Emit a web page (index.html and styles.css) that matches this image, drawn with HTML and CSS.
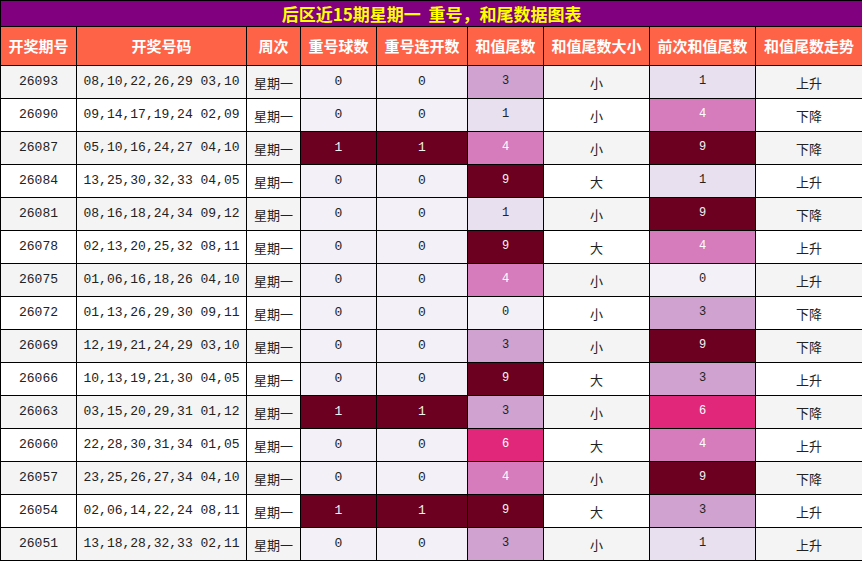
FILE: index.html
```html
<!DOCTYPE html>
<html lang="zh-CN">
<head>
<meta charset="utf-8">
<title>后区近15期星期一 重号，和尾数据图表</title>
<link rel="stylesheet" href="styles.css">
</head>
<body>
<table class="chart">
  <colgroup>
    <col class="c-issue"><col class="c-nums"><col class="c-week"><col class="c-rep"><col class="c-repc"><col class="c-tail"><col class="c-size"><col class="c-prev"><col class="c-trend">
  </colgroup>
  <thead>
    <tr class="title-row"><th colspan="9">后区近15期星期一&nbsp;&nbsp;重号，和尾数据图表</th></tr>
    <tr class="head-row">
      <th>开奖期号</th><th>开奖号码</th><th>周次</th><th>重号球数</th><th>重号连开数</th><th>和值尾数</th><th>和值尾数大小</th><th>前次和值尾数</th><th>和值尾数走势</th>
    </tr>
  </thead>
  <tbody>
    <tr><td class="mono">26093</td><td class="mono">08,10,22,26,29 03,10</td><td class="cjk">星期一</td><td class="v r0">0</td><td class="v r0">0</td><td class="t t3">3</td><td class="cjk">小</td><td class="t t1">1</td><td class="cjk">上升</td></tr>
    <tr><td class="mono">26090</td><td class="mono">09,14,17,19,24 02,09</td><td class="cjk">星期一</td><td class="v r0">0</td><td class="v r0">0</td><td class="t t1">1</td><td class="cjk">小</td><td class="t t4">4</td><td class="cjk">下降</td></tr>
    <tr><td class="mono">26087</td><td class="mono">05,10,16,24,27 04,10</td><td class="cjk">星期一</td><td class="v r1">1</td><td class="v r1">1</td><td class="t t4">4</td><td class="cjk">小</td><td class="t t9">9</td><td class="cjk">下降</td></tr>
    <tr><td class="mono">26084</td><td class="mono">13,25,30,32,33 04,05</td><td class="cjk">星期一</td><td class="v r0">0</td><td class="v r0">0</td><td class="t t9">9</td><td class="cjk">大</td><td class="t t1">1</td><td class="cjk">上升</td></tr>
    <tr><td class="mono">26081</td><td class="mono">08,16,18,24,34 09,12</td><td class="cjk">星期一</td><td class="v r0">0</td><td class="v r0">0</td><td class="t t1">1</td><td class="cjk">小</td><td class="t t9">9</td><td class="cjk">下降</td></tr>
    <tr><td class="mono">26078</td><td class="mono">02,13,20,25,32 08,11</td><td class="cjk">星期一</td><td class="v r0">0</td><td class="v r0">0</td><td class="t t9">9</td><td class="cjk">大</td><td class="t t4">4</td><td class="cjk">上升</td></tr>
    <tr><td class="mono">26075</td><td class="mono">01,06,16,18,26 04,10</td><td class="cjk">星期一</td><td class="v r0">0</td><td class="v r0">0</td><td class="t t4">4</td><td class="cjk">小</td><td class="t t0">0</td><td class="cjk">上升</td></tr>
    <tr><td class="mono">26072</td><td class="mono">01,13,26,29,30 09,11</td><td class="cjk">星期一</td><td class="v r0">0</td><td class="v r0">0</td><td class="t t0">0</td><td class="cjk">小</td><td class="t t3">3</td><td class="cjk">下降</td></tr>
    <tr><td class="mono">26069</td><td class="mono">12,19,21,24,29 03,10</td><td class="cjk">星期一</td><td class="v r0">0</td><td class="v r0">0</td><td class="t t3">3</td><td class="cjk">小</td><td class="t t9">9</td><td class="cjk">下降</td></tr>
    <tr><td class="mono">26066</td><td class="mono">10,13,19,21,30 04,05</td><td class="cjk">星期一</td><td class="v r0">0</td><td class="v r0">0</td><td class="t t9">9</td><td class="cjk">大</td><td class="t t3">3</td><td class="cjk">上升</td></tr>
    <tr><td class="mono">26063</td><td class="mono">03,15,20,29,31 01,12</td><td class="cjk">星期一</td><td class="v r1">1</td><td class="v r1">1</td><td class="t t3">3</td><td class="cjk">小</td><td class="t t6">6</td><td class="cjk">下降</td></tr>
    <tr><td class="mono">26060</td><td class="mono">22,28,30,31,34 01,05</td><td class="cjk">星期一</td><td class="v r0">0</td><td class="v r0">0</td><td class="t t6">6</td><td class="cjk">大</td><td class="t t4">4</td><td class="cjk">上升</td></tr>
    <tr><td class="mono">26057</td><td class="mono">23,25,26,27,34 04,10</td><td class="cjk">星期一</td><td class="v r0">0</td><td class="v r0">0</td><td class="t t4">4</td><td class="cjk">小</td><td class="t t9">9</td><td class="cjk">下降</td></tr>
    <tr><td class="mono">26054</td><td class="mono">02,06,14,22,24 08,11</td><td class="cjk">星期一</td><td class="v r1">1</td><td class="v r1">1</td><td class="t t9">9</td><td class="cjk">大</td><td class="t t3">3</td><td class="cjk">上升</td></tr>
    <tr><td class="mono">26051</td><td class="mono">13,18,28,32,33 02,11</td><td class="cjk">星期一</td><td class="v r0">0</td><td class="v r0">0</td><td class="t t3">3</td><td class="cjk">小</td><td class="t t1">1</td><td class="cjk">上升</td></tr>
  </tbody>
</table>
</body>
</html>
```

FILE: styles.css
```css
html, body {
  margin: 0;
  padding: 0;
  background: #ffffff;
}

.chart {
  border-collapse: collapse;
  table-layout: fixed;
  width: 862px;
  font-family: "Liberation Mono", "DejaVu Sans Mono", monospace;
  color: #222;
}

.c-issue { width: 76px; }
.c-nums  { width: 170px; }
.c-week  { width: 54px; }
.c-rep   { width: 76px; }
.c-repc  { width: 91px; }
.c-tail  { width: 76px; }
.c-size  { width: 106px; }
.c-prev  { width: 106px; }
.c-trend { width: 107px; }

.chart th,
.chart td {
  border: 1px solid #000;
  padding: 0;
  text-align: center;
  vertical-align: middle;
  white-space: nowrap;
  overflow: hidden;
}

.title-row th {
  height: 25px;
  background: #800080;
  color: #ffff00;
  font-family: "Noto Sans CJK SC", "Liberation Sans", sans-serif;
  font-size: 17px;
  font-weight: bold;
  line-height: 24px;
}

.head-row th {
  height: 38px;
  background: #ff6347;
  color: #ffffff;
  font-family: "Noto Sans CJK SC", "Liberation Sans", sans-serif;
  font-size: 15px;
  font-weight: bold;
  line-height: 20px;
}

.chart tbody tr:nth-child(odd) { background: #f4f4f4; }
.chart tbody tr:nth-child(even) { background: #ffffff; }

.chart td {
  height: 32px;
  font-size: 13px;
  line-height: 16px;
}

.chart td.cjk {
  height: 30px;
  padding-top: 2px;
  font-family: "Noto Sans CJK SC", sans-serif;
  font-size: 13px;
}

.chart td.t {
  height: 29px;
  padding-bottom: 3px;
  font-size: 12px;
}

.chart td.r0,
.chart td.t0 { background: #f3f1f7; }
.chart td.r1 { background: #6b0020; color: #f2f2f2; }

.chart td.t1 { background: #e8e0ee; }
.chart td.t3 { background: #cfa2cf; }
.chart td.t4 { background: #d67bbb; color: #ffffff; }
.chart td.t6 { background: #e0277a; color: #ffffff; }
.chart td.t9 { background: #6b0020; color: #f2f2f2; }
```
